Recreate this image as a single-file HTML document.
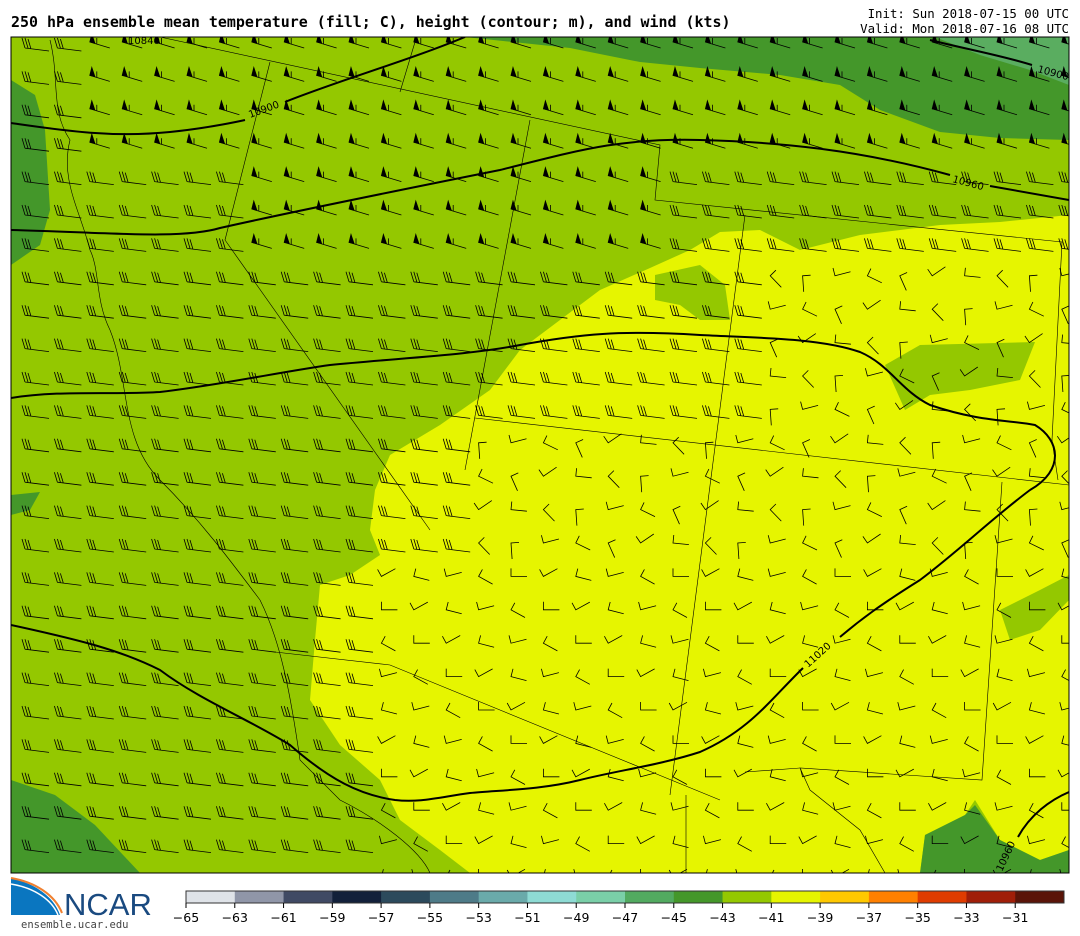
<!DOCTYPE html>
<html><head><meta charset="utf-8"><style>
body{margin:0;width:1080px;height:936px;background:#fff;overflow:hidden;font-family:"DejaVu Sans Mono","Liberation Mono",monospace;}
.t{position:absolute;font-size:14px;color:#000}
</style></head><body>
<div class="t" style="left:11px;top:13px;font-weight:bold;font-size:14.95px">250 hPa ensemble mean temperature (fill; C), height (contour; m), and wind (kts)</div>
<div class="t" style="right:11px;top:6px;text-align:right;font-size:12.4px;line-height:15px">Init: Sun 2018-07-15 00 UTC<br>Valid: Mon 2018-07-16 08 UTC</div>
<svg width="1080" height="936" style="position:absolute;left:0;top:0" id="s">
<defs><clipPath id="c"><rect x="11" y="37" width="1058" height="836"/></clipPath></defs>
<g clip-path="url(#c)">
<rect x="11" y="37" width="1058" height="836" fill="#94c800"/>
<path fill="#e6f500" d="M1069,215 L1000,222 940,225 860,235 800,250 760,230 720,232 690,250 650,268 600,290 560,320 520,350 490,390 440,425 390,455 375,490 370,530 380,555 350,575 320,585 315,640 310,700 340,745 380,780 400,820 440,850 470,873 920,873 925,835 965,815 975,800 1000,840 1040,860 1069,850Z"/>
<path fill="#94c800" d="M655,275 L700,265 725,285 730,320 700,320 680,305 655,300Z"/>
<path fill="#94c800" d="M885,365 L920,345 1035,342 1020,380 970,390 930,395 905,410Z"/>
<path fill="#94c800" d="M1000,610 L1040,590 1069,575 1069,600 1040,630 1010,640Z"/>
<path fill="#44972a" d="M465,37 L1069,37 1069,140 1000,138 940,132 880,110 840,85 780,75 700,68 640,62 570,48Z"/>
<path fill="#5aad60" d="M935,37 L1069,37 1069,85 1030,70 980,55Z"/>
<path fill="#44972a" d="M11,80 L35,95 45,130 50,210 40,245 11,265Z"/>
<path fill="#44972a" d="M11,495 L40,492 30,510 11,515Z"/>
<path fill="#44972a" d="M11,780 L55,795 95,825 140,873 11,873Z"/>
<path fill="#44972a" d="M920,873 L925,835 965,815 975,805 1000,840 1040,860 1069,850 1069,873Z"/>
<g fill="none" stroke="#000" stroke-width="0.6">
<path d="M270,62 L225,240 430,530"/><path d="M415,42 L400,92"/><path d="M530,120 L465,470"/>
<path d="M160,37 L660,145 655,200 1062,242 1052,440 1058,480"/><path d="M475,418 L1069,485"/>
<path d="M1002,482 L982,780 800,768 810,790 860,830 885,873"/><path d="M745,215 L670,795"/>
<path d="M275,652 L390,665 720,800"/><path d="M745,772 L800,768"/><path d="M686,795 L686,873"/>
<path d="M50,40 C60,80 50,110 70,140 C60,180 80,210 90,250 C100,270 95,300 110,330 C130,380 120,440 160,480 C200,520 230,560 260,600 C280,640 290,690 300,760 L340,800 C380,820 420,850 430,873"/>
</g>
<g fill="none" stroke="#000" stroke-width="2">
<path d="M11,123 C60,130 110,138 170,132 C210,128 245,120 245,120"/><path d="M285,102 C340,80 410,60 465,37"/>
<path d="M11,230 C100,232 180,240 220,228 C300,210 400,190 500,170 C580,150 620,138 700,140 C780,142 860,150 950,175"/><path d="M990,186 L1069,200"/>
<path d="M930,40 C970,50 1000,55 1032,65"/>
<path d="M11,398 C60,390 110,395 160,392 C220,385 280,372 330,365 C400,358 470,355 520,345 C580,334 620,330 700,335 C760,338 820,338 860,352 C890,365 900,390 930,405 C980,422 1010,420 1035,425 C1060,440 1065,470 1030,490 C990,520 960,550 920,580 C880,605 860,620 840,637"/>
<path d="M803,668 C770,700 750,730 700,752 C660,765 620,770 580,780 C540,790 500,790 470,793 C440,797 420,803 395,800 C360,795 330,780 290,745 C250,720 200,700 160,670 C120,650 80,640 11,625"/>
<path d="M1018,837 C1030,815 1050,800 1069,792"/>
</g>
<g font-family="DejaVu Sans,sans-serif" font-size="10" fill="#000">
<text x="250" y="118" transform="rotate(-20 250 118)">10900</text>
<text x="952" y="182" transform="rotate(15 952 182)">10960</text>
<text x="1037" y="72" transform="rotate(15 1037 72)">10900</text>
<text x="128" y="44">10840</text>
<text x="808" y="668" transform="rotate(-42 808 668)">11020</text>
<text x="1002" y="872" transform="rotate(-65 1002 872)">10960</text>
</g>
<g id="b" stroke="#000" stroke-width="0.8" fill="#000"></g>
</g>
<rect x="11" y="37" width="1058" height="836" fill="none" stroke="#000" stroke-width="1"/>
<g id="cb"></g>
<path d="M11,878 L11,915 L60,915 C55,900 40,885 11,878Z" fill="#0a76c0"/>
<path d="M11,878 C35,882 55,895 62,913" stroke="#f08030" stroke-width="2" fill="none"/>
<path d="M11,884 C35,888 52,900 58,915" stroke="#fff" stroke-width="1.5" fill="none"/>
<text x="64" y="915" font-family="Liberation Sans,sans-serif" font-size="31" fill="#1a4a80">NCAR</text>
<text x="21" y="928" font-size="10.5" fill="#444" font-family="DejaVu Sans Mono,monospace">ensemble.ucar.edu</text>
</svg>
<script>
var ns="http://www.w3.org/2000/svg",b=document.getElementById("b");
function el(t,a){var e=document.createElementNS(ns,t);for(var k in a)e.setAttribute(k,a[k]);b.appendChild(e);}
for(var j=0;j<26;j++)for(var i=0;i<33;i++){
 var x=25+i*32.4,y=42+j*33.4;
 var yel=(x>470&&y>430)||(x>750&&y>260)||(x>380&&y>560);
 var flag=(y<150&&x>80)||(y<280&&x>240&&x<650&&y<250);
 if(yel){
  var a=((i*37+j*53)%7)*0.35-0.6, L=16;
  if(y>560){a=-0.5+((i*13+j*7)%5)*0.25;}
  var ex=x+L*Math.cos(a),ey=y+L*Math.sin(a);
  var px=-Math.sin(a)*8,py=Math.cos(a)*8;
  el("path",{d:"M"+ex.toFixed(1)+","+ey.toFixed(1)+" L"+x+","+y+" L"+(x-px).toFixed(1)+","+(y-py).toFixed(1),fill:"none"});
 }
 else if(flag){el("path",{d:"M"+x+","+y+" L"+(x+20)+","+(y+6),fill:"none"});el("path",{d:"M"+x+","+y+" L"+(x+2)+","+(y-8)+" L"+(x+5)+","+(y+1)+"Z"});el("path",{d:"M"+(x+7)+","+(y+2)+" L"+(x+7)+","+(y-4),fill:"none"});}
 else{el("path",{d:"M"+x+","+(y+6)+" L"+(x+24)+","+(y+9)+" M"+x+","+(y+6)+" L"+(x-3)+","+(y-4)+" M"+(x+3)+","+(y+6)+" L"+x+","+(y-4)+" M"+(x+6)+","+(y+7)+" L"+(x+3)+","+(y-3),fill:"none"});}
}
var cols=["#dfe3e8","#9096a8","#404a64","#12203a","#2c4a5c","#4e7b88","#6aaaaa","#8edbd4","#7acfa8","#52aa60","#44972a","#94c800","#e6f500","#ffc800","#ff8000","#e03c00","#a01e08","#5a1408"];
var cb=document.getElementById("cb"),w=878/18;
function e2(t,a,tx){var e=document.createElementNS(ns,t);for(var k in a)e.setAttribute(k,a[k]);if(tx)e.textContent=tx;cb.appendChild(e);}
cols.forEach(function(c,i){e2("rect",{x:186+i*w,y:891,width:w+0.5,height:12,fill:c});});
e2("rect",{x:186,y:891,width:878,height:12,fill:"none",stroke:"#333","stroke-width":1});
for(var k=0;k<18;k++){var xx=186+k*w;e2("line",{x1:xx,y1:903,x2:xx,y2:908,stroke:"#000"});e2("text",{x:xx,y:922,"text-anchor":"middle","font-size":"12.5","font-family":"DejaVu Sans,sans-serif"},"\u2212"+(65-2*k));}
</script>
</body></html>
